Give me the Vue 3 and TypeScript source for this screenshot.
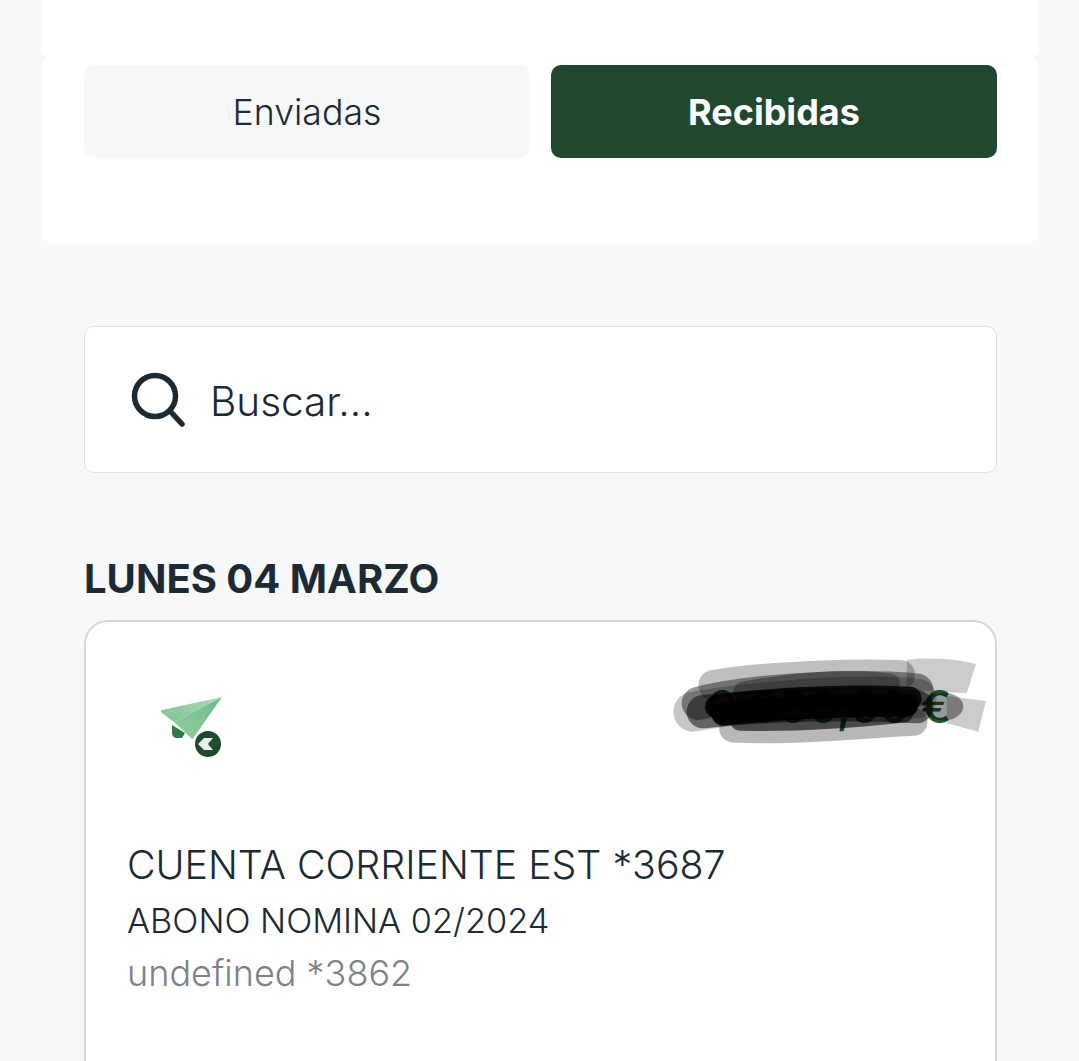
<script setup lang="ts">
interface Movement {
  account: string
  concept: string
  origin: string
  amount: string
}

const tabs = ['Enviadas', 'Recibidas']
const activeTab = 'Recibidas'

const movement: Movement = {
  account: 'CUENTA CORRIENTE EST *3687',
  concept: 'ABONO NOMINA 02/2024',
  origin: 'undefined *3862',
  amount: '0.000,00 €',
}

// scribble strokes drawn over the amount, in 3x coordinates
const scribble = [
  { d: 'M160 135 C 350 105, 600 100, 720 105', w: 90, o: 0.25 },
  { d: 'M100 215 C 300 180, 600 160, 770 175', w: 120, o: 0.22 },
  { d: 'M220 265 C 400 275, 650 250, 760 245', w: 85, o: 0.28 },
  { d: 'M115 190 C 300 145, 600 135, 770 150', w: 100, o: 0.4 },
  { d: 'M130 215 C 350 190, 600 190, 770 200', w: 100, o: 0.5 },
  { d: 'M250 155 C 400 125, 560 115, 690 130', w: 60, o: 0.3 },
  { d: 'M170 200 C 350 172, 600 168, 750 175', w: 70, o: 0.85 },
  { d: 'M190 222 C 380 200, 600 195, 740 195', w: 70, o: 0.9 },
  { d: 'M240 242 C 400 247, 600 232, 730 218', w: 60, o: 0.6 },
]
</script>

<template>
  <div class="page">
    <div class="top-strip"></div>

    <section class="tabs-card">
      <div class="tabs">
        <button
          v-for="tab in tabs"
          :key="tab"
          class="tab"
          :class="{ active: tab === activeTab }"
        >
          {{ tab }}
        </button>
      </div>
    </section>

    <main class="content">
      <div class="search">
        <svg class="search-icon" viewBox="0 0 56 56" fill="none">
          <circle cx="25" cy="24" r="20.5" stroke="#1b2a33" stroke-width="5.5" />
          <path d="M40 39 L52 52" stroke="#1b2a33" stroke-width="5.5" stroke-linecap="round" />
        </svg>
        <span class="search-text">Buscar...</span>
      </div>

      <h2 class="day">LUNES 04 MARZO</h2>

      <article class="movement">
        <div class="movement-top">
          <svg class="plane" viewBox="-1 0 96 96">
            <defs>
              <linearGradient id="wingA" x1="0" y1="1" x2="1" y2="0">
                <stop offset="0" stop-color="#7fc296" />
                <stop offset="1" stop-color="#a9dcb6" />
              </linearGradient>
              <linearGradient id="wingB" x1="0" y1="1" x2="1" y2="0">
                <stop offset="0" stop-color="#92d0a4" />
                <stop offset="1" stop-color="#6fb888" />
              </linearGradient>
            </defs>
            <path d="M44 47 L44 56 Q45 60 49 60 L54 60 L57 55 Z" fill="#2f7a4c" />
            <path d="M94 19 L34 32 Q32 33 34 35 L46 44 Z" fill="url(#wingA)" />
            <path d="M94 19 L46 44 L63 60 Q65 62 66 59 Z" fill="url(#wingB)" />
            <circle cx="80" cy="66" r="13" fill="#1f4a30" />
            <path d="M85 60 L76 60 L70 66 L76 72 L85 72 L80 66 Z" fill="#e4f0ea" />
          </svg>
          <div class="amount">{{ movement.amount }}</div>
          <svg class="redaction" viewBox="0 0 1050 360" fill="none">
            <path d="M740 60 C 800 52, 880 55, 948 72 L 920 160 L 740 150 Z" fill="#000" fill-opacity="0.2" />
            <path d="M860 168 L 978 183 L 955 275 L 860 250 Z" fill="#000" fill-opacity="0.2" />
            <path
              v-for="(s, i) in scribble"
              :key="i"
              :d="s.d"
              :stroke-width="s.w"
              :stroke-opacity="s.o"
              stroke="#000"
              stroke-linecap="round"
            />
            <ellipse cx="850" cy="200" rx="60" ry="42" fill="#000" fill-opacity="0.4" />
          </svg>
        </div>

        <p class="account">{{ movement.account }}</p>
        <p class="concept">{{ movement.concept }}</p>
        <p class="origin">{{ movement.origin }}</p>
      </article>
    </main>
  </div>
</template>

<style>
body {
  margin: 0;
  background: #f7f8fa;
}
</style>

<style scoped>
.page {
  height: 1061px;
  overflow: hidden;
  background: #f7f8fa;
  font-family: Inter, "Noto Sans", sans-serif;
  color: #1b2a33;
}

.top-strip {
  height: 55px;
  margin: 0 41px 0 42px;
  background: #fff;
}

.tabs-card {
  height: 188px;
  margin: 0 41px 0 42px;
  padding: 10px 41px 0 42px;
  box-sizing: border-box;
  background: #fff;
  border-radius: 10px;
}

.tabs {
  display: grid;
  grid-template-columns: 1fr 1fr;
  gap: 21px;
}

.tab {
  height: 93px;
  border: 0;
  border-radius: 10px;
  background: #f7f8fa;
  color: #1b2a33;
  font-family: inherit;
  font-size: 35.7px;
  font-weight: 300;
}

.tab.active {
  background: #20482f;
  color: #fff;
  font-size: 36px;
  font-weight: 700;
}

.content {
  padding: 83px 82px 0 84px;
}

.search {
  display: flex;
  align-items: center;
  gap: 24px;
  height: 147px;
  padding-left: 45px;
  box-sizing: border-box;
  background: #fff;
  border: 1px solid #dfe1e6;
  border-radius: 10px;
}

.search-icon {
  width: 56px;
  height: 56px;
}

.search-text {
  position: relative;
  top: 2px;
  font-size: 40.5px;
  font-weight: 300;
}

.day {
  margin: 82px 0 17px;
  font-size: 40px;
  line-height: 48px;
  font-weight: 700;
}

.movement {
  height: 520px;
  padding: 56px 41px 0;
  box-sizing: border-box;
  background: #fff;
  border: 2px solid #d5d7db;
  border-radius: 24px;
}

.movement-top {
  position: relative;
  display: flex;
  justify-content: space-between;
  align-items: flex-start;
  height: 96px;
  margin-bottom: 66px;
}

.plane {
  width: 96px;
  height: 96px;
}

.amount {
  padding: 3px 3px 0 0;
  font-size: 45px;
  line-height: 52px;
  font-weight: 600;
  color: #1f5c33;
}

.redaction {
  position: absolute;
  top: -38px;
  left: 533px;
  width: 350px;
  height: 120px;
}

.account {
  margin: 0;
  font-size: 39.3px;
  line-height: 50px;
  font-weight: 300;
}

.concept {
  margin: 7px 0 0;
  font-size: 34.3px;
  line-height: 48px;
  font-weight: 300;
}

.origin {
  margin: 4px 0 0;
  font-size: 36px;
  line-height: 48px;
  font-weight: 300;
  color: #7d8287;
}
</style>
